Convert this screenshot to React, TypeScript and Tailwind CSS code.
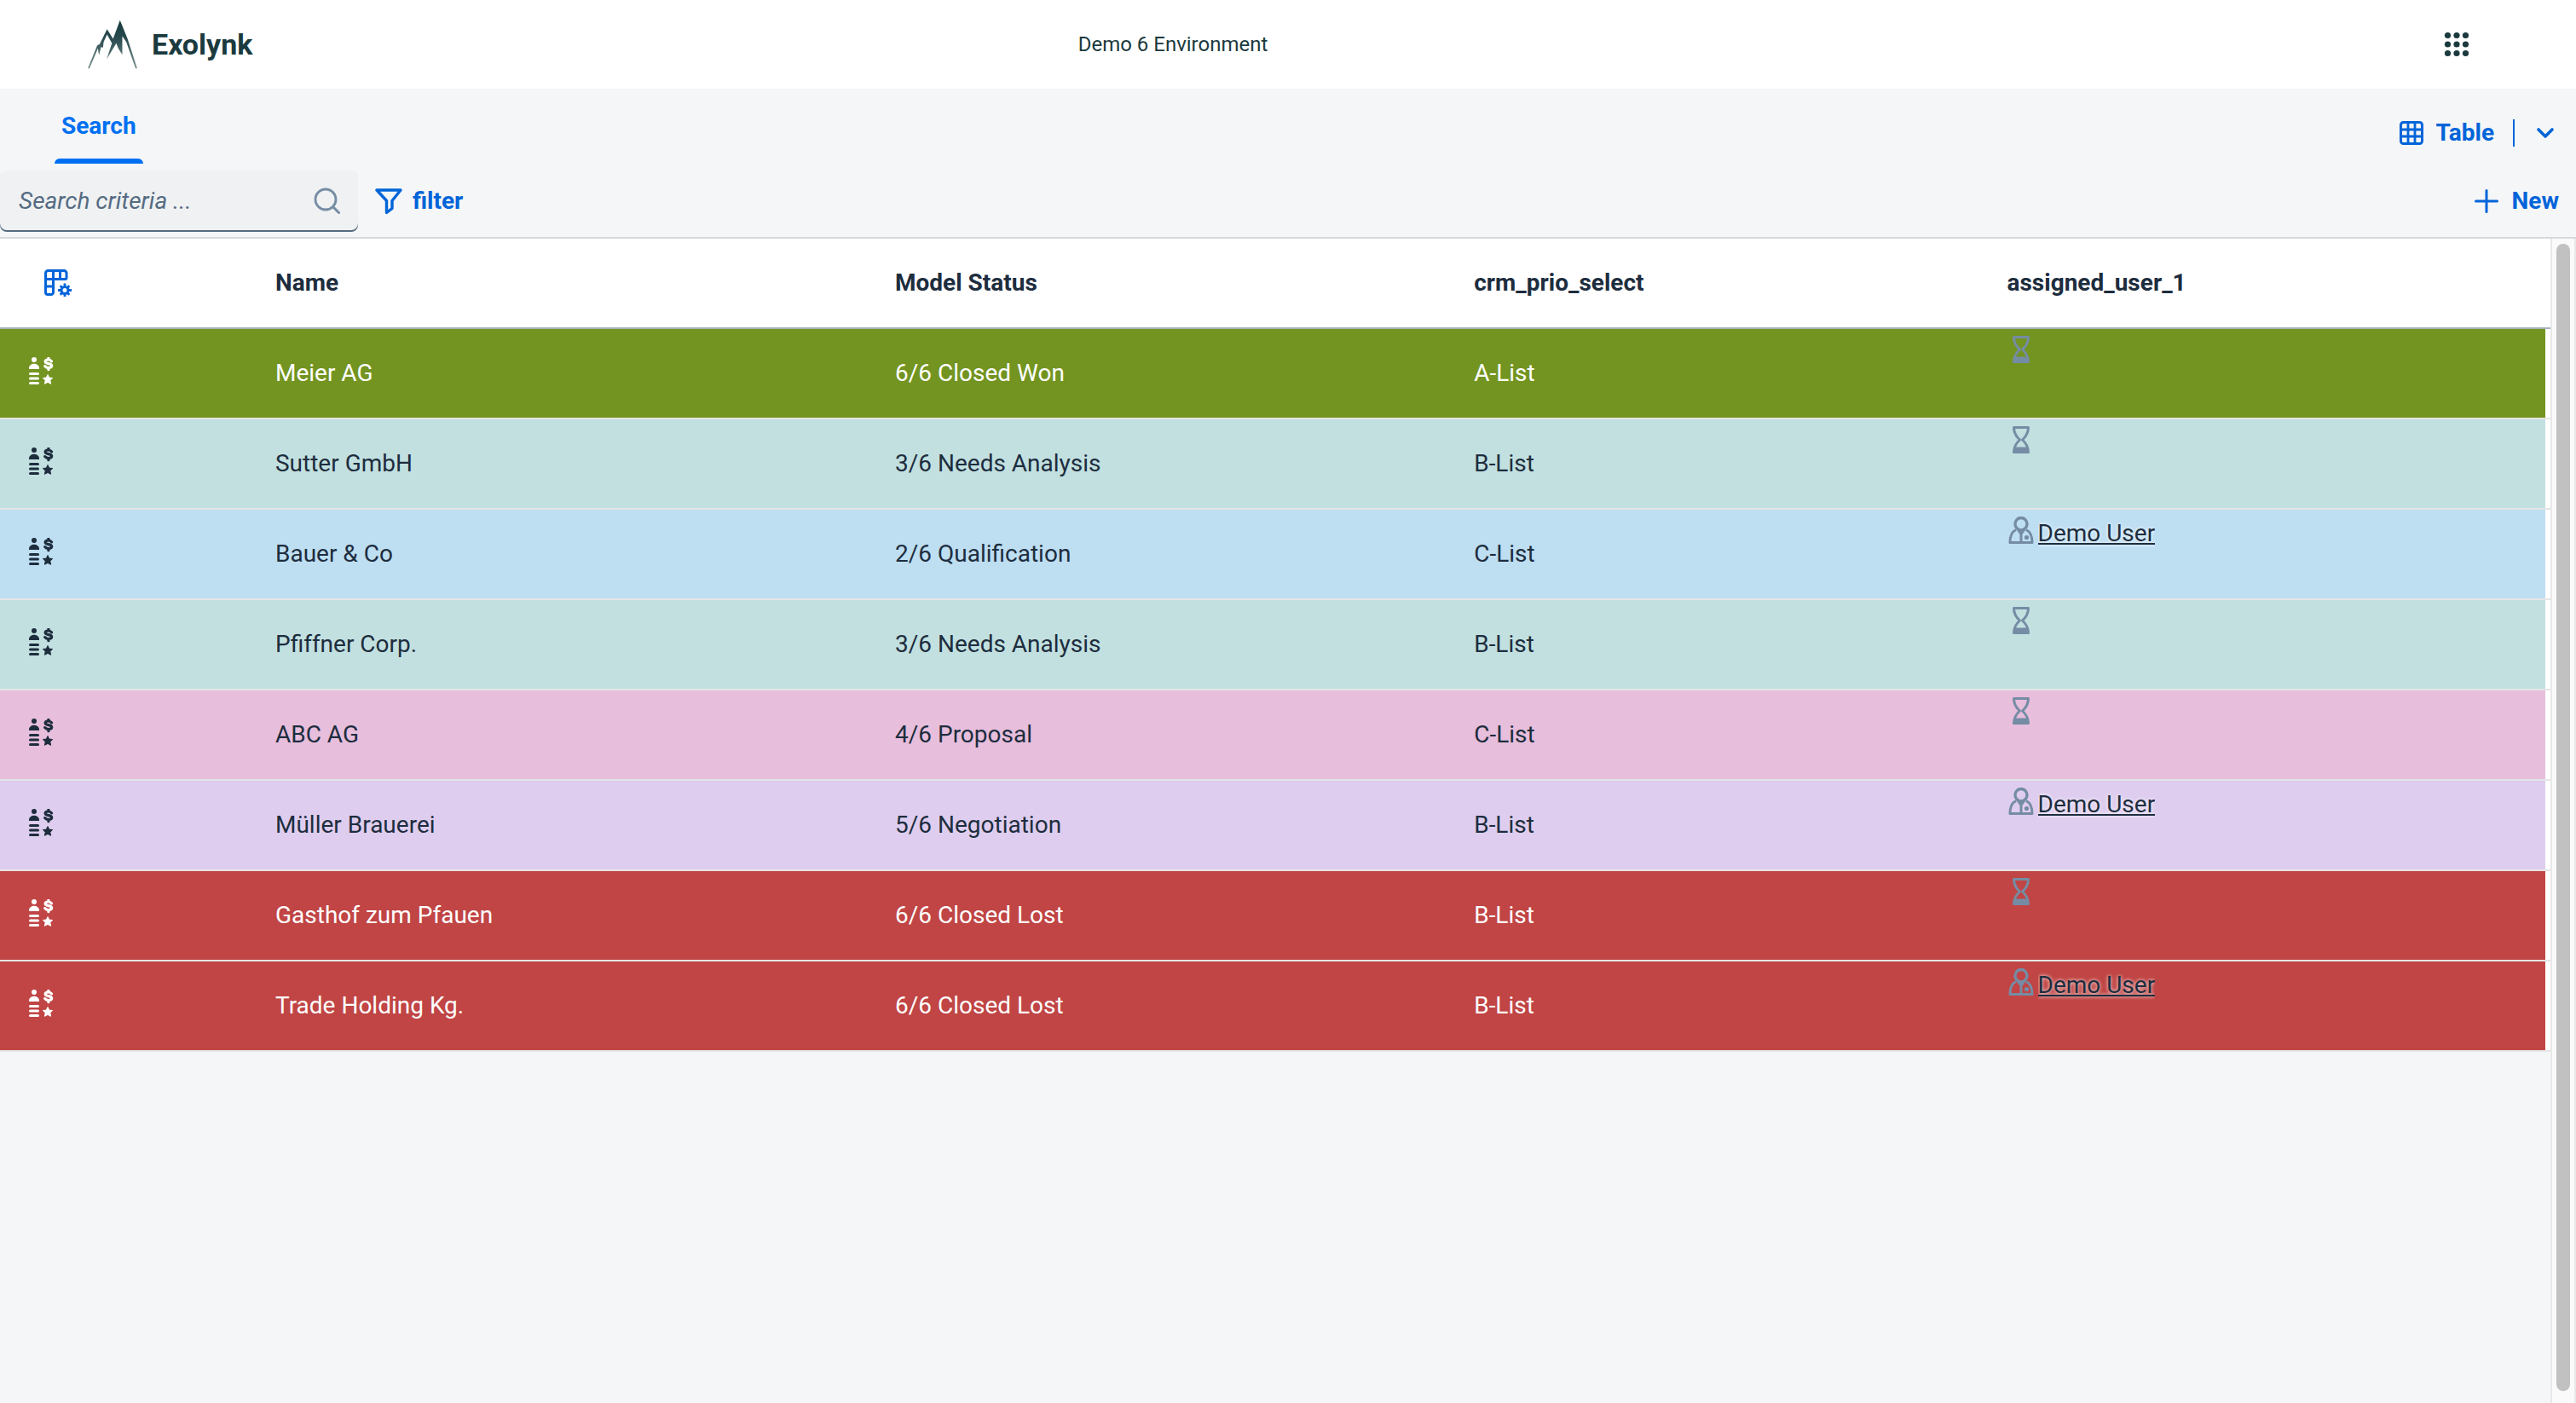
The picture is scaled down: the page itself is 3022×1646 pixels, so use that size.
import type { ReactNode } from "react";

type Row = {
  name: string;
  status: string;
  prio: string;
  user?: string;
  color: string;
};

const WON = "bg-[#739420] text-white";
const NEEDS = "bg-[#c2e0e0] text-[#1d2d3e]";
const QUALIFIED = "bg-[#bedef2] text-[#1d2d3e]";
const PROPOSAL = "bg-[#e7bedc] text-[#1d2d3e]";
const NEGOTIATION = "bg-[#decdee] text-[#1d2d3e]";
const LOST = "bg-[#c04544] text-white";

const rows: Row[] = [
  { name: "Meier AG", status: "6/6 Closed Won", prio: "A-List", color: WON },
  { name: "Sutter GmbH", status: "3/6 Needs Analysis", prio: "B-List", color: NEEDS },
  { name: "Bauer & Co", status: "2/6 Qualification", prio: "C-List", user: "Demo User", color: QUALIFIED },
  { name: "Pfiffner Corp.", status: "3/6 Needs Analysis", prio: "B-List", color: NEEDS },
  { name: "ABC AG", status: "4/6 Proposal", prio: "C-List", color: PROPOSAL },
  { name: "Müller Brauerei", status: "5/6 Negotiation", prio: "B-List", user: "Demo User", color: NEGOTIATION },
  { name: "Gasthof zum Pfauen", status: "6/6 Closed Lost", prio: "B-List", color: LOST },
  { name: "Trade Holding Kg.", status: "6/6 Closed Lost", prio: "B-List", user: "Demo User", color: LOST },
];

function Icon({ children, className = "" }: { children: ReactNode; className?: string }) {
  return (
    <svg viewBox="0 0 32 32" fill="none" aria-hidden="true" className={`size-8 shrink-0 ${className}`}>
      {children}
    </svg>
  );
}

function Logo() {
  return (
    <svg viewBox="68 40 176 172" aria-hidden="true" className="h-[58px] w-[60px]">
      <defs>
        <linearGradient id="peak" x1="0" y1="0" x2="0" y2="1">
          <stop offset="0" stopColor="#153a3d" />
          <stop offset="0.4" stopColor="#2b4c50" />
          <stop offset="1" stopColor="#809795" />
        </linearGradient>
      </defs>
      <path
        fill="url(#peak)"
        d="M70 210 L103 130 L111 126 L137 73 L158 107 L182 42 L208 106 L242 210 L236 210 L204 118 L190 98 L190 162 L176 140 L169 122 L136 178 L145 148 L154 122 L137 92 L125 118 L123 137 L116 136 L109 164 L105 140 L76 210 Z"
      />
    </svg>
  );
}

function AppsIcon() {
  return (
    <Icon>
      {[5.5, 16, 26.5].map((y) => [5.5, 16, 26.5].map((x) => <circle key={`${x}-${y}`} cx={x} cy={y} r="3.6" fill="currentColor" />))}
    </Icon>
  );
}

function TableIcon() {
  return (
    <Icon>
      <rect x="3.5" y="3.5" width="25" height="25" rx="3" stroke="currentColor" strokeWidth="3" />
      <path d="M12 3v26M20 3v26M3 12h26M3 20h26" stroke="currentColor" strokeWidth="2.8" />
    </Icon>
  );
}

function TableSettingsIcon() {
  return (
    <Icon>
      <path
        d="M4.500 1.500h18.500a3 3 0 0 1 3 3v5.500a1.500 1.500 0 0 1-1.500 1.500H10.500v15.500a2.500 2.500 0 0 1-2.500 2.500H4a2.500 2.500 0 0 1-2.500-2.500V4.500a3 3 0 0 1 3-3zM10.500 1.500v10M18.500 1.500v10M1.500 11.500h9M1.500 20h9"
        stroke="currentColor"
        strokeWidth="3"
      />
      <circle cx="24" cy="24.500" r="4" stroke="currentColor" strokeWidth="3" />
      <path
        d="M24 16.500v3M24 29.500v2.500M16 24.500h3M29 24.500h3M18.700 19.200l2 2M27.300 27.800l2 2M18.700 29.800l2-2M27.300 21.200l2-2"
        stroke="currentColor"
        strokeWidth="2.800"
      />
    </Icon>
  );
}

function FilterIcon() {
  return (
    <Icon>
      <path
        d="M2 3h28L20 15.500v9L13.500 29.500V15.500L2 3z"
        stroke="currentColor"
        strokeWidth="3.400"
        strokeLinejoin="round"
      />
    </Icon>
  );
}

function SearchIcon() {
  return (
    <Icon>
      <circle cx="14" cy="14" r="12" stroke="currentColor" strokeWidth="2.800" />
      <path d="M23 23l6.500 6.500" stroke="currentColor" strokeWidth="3" strokeLinecap="round" />
    </Icon>
  );
}

function PlusIcon() {
  return (
    <Icon>
      <path d="M16 3.500v25M3.500 16h25" stroke="currentColor" strokeWidth="3" strokeLinecap="round" />
    </Icon>
  );
}

function ChevronIcon() {
  return (
    <Icon>
      <path d="M8 12l8 8 8-8" stroke="currentColor" strokeWidth="3.600" strokeLinecap="round" strokeLinejoin="round" />
    </Icon>
  );
}

function OpportunityIcon() {
  return (
    <Icon>
      <circle cx="8" cy="3" r="3" fill="currentColor" />
      <path d="M2 14v-1.500a6 4.700 0 0 1 12 0V14z" fill="currentColor" />
      <path d="M3.500 19.400h9M3.500 24.900h9M3.500 30.400h9" stroke="currentColor" strokeWidth="3" strokeLinecap="round" />
      <path
        d="M28.500 4.800c-1-1.500-2.400-1.800-4-1.800-2.300 0-3.400 1-3.400 2.300 0 3.300 7.600 1.400 7.600 4.800 0 1.500-1.500 2.400-3.700 2.400-1.800 0-3.300-.6-4.300-1.900M24.900 1v1.500M24.900 13v1.700"
        stroke="currentColor"
        strokeWidth="3.200"
        strokeLinecap="round"
      />
      <path
        d="M24 20.500l1.700 3.600 4 .4-2.900 2.800.8 4-3.600-1.900-3.600 1.900.8-4-2.900-2.800 4-.4z"
        fill="currentColor"
        stroke="currentColor"
        strokeWidth="1"
        strokeLinejoin="round"
      />
    </Icon>
  );
}

function HourglassIcon() {
  return (
    <Icon className="text-[#758ca4]">
      <path
        d="M7.500 1.500h17c0 6-2.500 10.500-7 14.500 4.500 4 7 8 7 14.500h-17c0-6.500 2.500-10.500 7-14.500-4.500-4-7-8.500-7-14.500z"
        stroke="currentColor"
        strokeWidth="3"
        strokeLinejoin="round"
      />
      <path d="M8 24.500h16v6H8z" fill="currentColor" />
    </Icon>
  );
}

function PersonIcon() {
  return (
    <Icon className="text-[#758ca4]">
      <ellipse cx="16" cy="8.700" rx="7" ry="7.200" stroke="currentColor" strokeWidth="3.400" />
      <path
        d="M10 15.500c-5 2.500-7 7-7 14.900h26c0-7.900-2-12.400-7-14.900"
        stroke="currentColor"
        strokeWidth="3"
        strokeLinejoin="round"
      />
      <path d="M11 16h10l-3.500 5v9h-3v-9z" fill="currentColor" />
      <circle cx="22.500" cy="24.500" r="2.600" fill="currentColor" />
    </Icon>
  );
}

function TopBar() {
  return (
    <header className="grid h-[104px] grid-cols-[1fr_auto_1fr] items-center bg-white pl-[102px] pr-[124px] text-[#1a3a3e]">
      <a href="#home" className="flex items-center gap-4 text-[34px] font-bold leading-10">
        <Logo />
        Exolynk
      </a>
      <h1 className="mr-[248px] text-2xl">Demo 6 Environment</h1>
      <button type="button" aria-label="Applications" className="justify-self-end">
        <AppsIcon />
      </button>
    </header>
  );
}

function ViewBar() {
  return (
    <div className="flex h-24 items-start justify-between pr-5 text-[#0064d9]">
      <div role="tablist" className="pl-16">
        <button
          type="button"
          role="tab"
          aria-selected="true"
          className="flex h-[88px] flex-col justify-between px-2 pt-[26px] font-bold text-[#0070f2]"
        >
          Search
          <span className="-mx-2 h-1.5 self-stretch rounded-t-md bg-[#0070f2]" />
        </button>
      </div>
      <div className="flex items-center pt-[34px]">
        <button type="button" className="flex items-center gap-3 font-bold">
          <TableIcon />
          Table
        </button>
        <span className="ml-[22px] mr-5 h-8 w-0.5 bg-[#0064d9]" />
        <button type="button" aria-label="Choose view">
          <ChevronIcon />
        </button>
      </div>
    </div>
  );
}

function SearchBar() {
  return (
    <div className="flex items-start justify-between border-b-2 border-[#d9d9d9] pb-1.5 pr-5 text-[#0064d9]">
      <div className="flex items-center gap-5">
        <label className="flex h-[72px] w-[420px] items-center rounded-lg bg-[#eff1f2] pl-[22px] pr-5 text-[#758ca4] shadow-[inset_0_-2px_0_#556b82]">
          <input
            type="text"
            aria-label="Search criteria"
            placeholder="Search criteria ..."
            className="min-w-0 flex-1 text-[#1d2d3e] outline-none placeholder:italic placeholder:text-[#556b82]"
          />
          <SearchIcon />
        </label>
        <button type="button" className="flex items-center gap-3 font-bold">
          <FilterIcon />
          filter
        </button>
      </div>
      <button type="button" className="flex h-[72px] items-center gap-3.5 font-bold">
        <PlusIcon />
        New
      </button>
    </div>
  );
}

function ResultTable() {
  return (
    <table className="w-full table-fixed border-separate border-spacing-0 bg-white text-left">
      <colgroup>
        <col className="w-[10.26%]" />
        <col className="w-[24.3%]" />
        <col className="w-[22.7%]" />
        <col className="w-[20.9%]" />
        <col />
        <col className="w-1.5" />
      </colgroup>
      <thead>
        <tr className="h-[106px] text-[#1d2d3e] *:border-b-2 *:border-[#a8b2bd]">
          <th className="pl-[52px]">
            <button type="button" aria-label="Table settings" className="block text-[#0064d9]">
              <TableSettingsIcon />
            </button>
          </th>
          <th className="px-4">Name</th>
          <th className="px-4">Model Status</th>
          <th className="px-4">crm_prio_select</th>
          <th className="px-4">assigned_user_1</th>
          <th />
        </tr>
      </thead>
      <tbody>
        {rows.map((row) => (
          <tr key={row.name} className="h-[106px] *:border-b-2 *:border-[#e5e5e5]">
            <td className={`pb-1.5 pl-8 ${row.color}`}>
              <OpportunityIcon />
            </td>
            <td className={`px-4 ${row.color}`}>{row.name}</td>
            <td className={`px-4 ${row.color}`}>{row.status}</td>
            <td className={`px-4 ${row.color}`}>{row.prio}</td>
            <td className={`px-4 pt-2 align-top ${row.color}`}>
              {row.user ? (
                <div className="flex items-start gap-1">
                  <PersonIcon />
                  <a
                    href="#user"
                    className="overflow-hidden pt-0.5 text-[#1d2d3e] underline decoration-2 underline-offset-2 [text-shadow:0_0_4px_#ffffff]"
                  >
                    {row.user}
                  </a>
                </div>
              ) : (
                <HourglassIcon />
              )}
            </td>
            <td />
          </tr>
        ))}
      </tbody>
    </table>
  );
}

export default function App() {
  return (
    <div className="flex h-screen flex-col bg-[#f5f6f7] font-['Roboto','Noto_Sans',sans-serif] text-[28px] leading-9">
      <TopBar />
      <ViewBar />
      <SearchBar />
      <main className="flex min-h-0 flex-1">
        <div className="min-w-0 flex-1 overflow-hidden">
          <ResultTable />
        </div>
        <div className="flex w-[30px] justify-center border-x-2 border-[#e8e8e8] bg-[#fafafa] pb-3.5 pt-1.5">
          <div className="w-4 rounded-full bg-[#c1c1c1]" />
        </div>
      </main>
    </div>
  );
}
